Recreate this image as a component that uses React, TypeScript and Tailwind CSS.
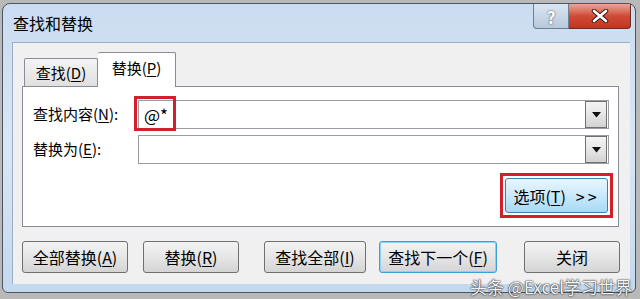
import { ReactNode } from "react";

function Acc({ children }: { children: ReactNode }) {
  return <span className="underline underline-offset-2 decoration-1">{children}</span>;
}

function DropArrow() {
  return (
    <div className="w-[22px] h-[27px] shrink-0 border border-[#707070] bg-gradient-to-b from-[#f4f4f4] via-[#e6e6e6] to-[#d2d2d2] flex items-center justify-center">
      <svg width="9" height="6" viewBox="0 0 9 6">
        <path d="M0 0 H9 L4.5 5.5 Z" fill="#111" />
      </svg>
    </div>
  );
}

function Combo({ children }: { children?: ReactNode }) {
  return (
    <div className="flex-1 h-[29px] border border-[#9a9ca3] bg-white flex items-center pl-[5px] pr-px">
      <div className="flex-1 text-[17px] text-black">{children}</div>
      <DropArrow />
    </div>
  );
}

function Btn({ children, className = "" }: { children: ReactNode; className?: string }) {
  return (
    <div
      className={
        "h-[32px] rounded-[3px] border border-[#707070] bg-gradient-to-b from-[#f3f3f3] via-[#e6e6e6] to-[#d4d4d4] flex items-center justify-center text-[16px] text-black " +
        className
      }
    >
      {children}
    </div>
  );
}

export default function App() {
  return (
    <div className="w-[640px] h-[299px] bg-[#b9b9b9] pt-[3px] pl-[2px] overflow-hidden font-['Noto_Sans_CJK_SC',sans-serif] relative">
      <div className="w-[634px] h-[290px] rounded-t-[8px] rounded-b-[6px] border border-[#4b5563] bg-gradient-to-b from-[#cadcf0] via-[#d9e7f5] to-[#c4d8ee] flex flex-col">
        {/* title bar */}
        <div className="h-[38px] flex items-start shrink-0">
          <div className="pl-[10px] pt-[7px] text-[16px] text-black leading-[24px]">查找和替换</div>
          <div className="ml-auto mr-[4px] flex">
            <div className="w-[36px] h-[25px] rounded-bl-[4px] border border-t-0 border-[#6f7f92] bg-gradient-to-b from-[#dbe6f2] to-[#b8c9dc] flex items-center justify-center text-white text-[17px] font-bold leading-none [text-shadow:0_0_2px_#334]">
              ?
            </div>
            <div className="w-[62px] h-[25px] rounded-br-[4px] border border-t-0 border-l-0 border-[#6b2a22] bg-gradient-to-b from-[#e7a597] via-[#cf4a36] to-[#c2351f] flex items-center justify-center">
              <svg width="18" height="14" viewBox="0 0 18 14">
                <path d="M3 2 L15 12 M15 2 L3 12" stroke="#3a1a14" strokeWidth="4.5" strokeLinecap="round" />
                <path d="M3 2 L15 12 M15 2 L3 12" stroke="#fff" strokeWidth="2.6" strokeLinecap="round" />
              </svg>
            </div>
          </div>
        </div>

        {/* client area */}
        <div className="ml-[9px] w-[618px] h-[242px] border-t border-l border-[#9bb0c8] bg-[#f0f0f0] flex flex-col">
          {/* tabs */}
          <div className="h-[43px] flex items-end pl-[11px] shrink-0">
            <div className="w-[74px] h-[30px] mb-[-2px] border border-b-0 border-[#898c95] rounded-t-[2px] bg-gradient-to-b from-[#f4f4f4] to-[#dedede] flex items-center justify-center text-[15px] text-black">
              查找(<Acc>D</Acc>)
            </div>
            <div className="w-[78px] h-[35px] mb-[-1px] border border-b-0 border-l-0 border-[#898c95] rounded-t-[2px] bg-white flex items-start pt-[4px] justify-center text-[15px] text-black relative z-10">
              替换(<Acc>P</Acc>)
            </div>
          </div>

          {/* panel */}
          <div className="ml-[9px] w-[597px] h-[141px] border border-[#898c95] bg-white relative flex flex-col pt-[13px] pl-[10px] pr-[9px]">
            <div className="flex items-center">
              <div className="w-[105px] text-[15px] text-black">
                查找内容(<Acc>N</Acc>):
              </div>
              <Combo>@*</Combo>
            </div>
            <div className="flex items-center mt-[6px]">
              <div className="w-[105px] text-[15px] text-black">
                替换为(<Acc>E</Acc>):
              </div>
              <Combo />
            </div>
            <div className="flex justify-end mt-[9px] -mr-[4px]">
              <div className="w-[113px] h-[45px] border-[3px] border-[#d21f2b] p-[2px]">
                <div className="h-full rounded-[3px] border border-[#3c7fb1] bg-gradient-to-b from-[#eaf6fd] via-[#c9e9fc] to-[#a7d9f5] flex items-center justify-center text-[16px] text-black gap-[10px]">
                  <span>
                    选项(<Acc>T</Acc>)
                  </span>
                  <span className="tracking-[3px]">&gt;&gt;</span>
                </div>
              </div>
            </div>
            {/* red highlight around find text */}
            <div className="absolute left-[111px] top-[9px] w-[42px] h-[35px] border-[3px] border-[#d21f2b]" />
          </div>

          {/* bottom buttons */}
          <div className="flex pl-[9px] mt-[14px]">
            <Btn className="w-[106px]">
              全部替换(<Acc>A</Acc>)
            </Btn>
            <Btn className="w-[96px] ml-[15px]">
              替换(<Acc>R</Acc>)
            </Btn>
            <Btn className="w-[102px] ml-[25px]">
              查找全部(<Acc>I</Acc>)
            </Btn>
            <Btn className="w-[118px] ml-[13px] !border-[#3c9fd8] shadow-[inset_0_0_0_1px_#8fd0f3]">
              查找下一个(<Acc>F</Acc>)
            </Btn>
            <Btn className="w-[96px] ml-[27px]">关闭</Btn>
          </div>
        </div>
      </div>

      {/* watermark */}
      <div className="absolute right-[8px] bottom-[1px] text-[17px] leading-[22px] text-[#f4f4f4] [text-shadow:0_0_2px_#222,0_0_1px_#222]">
        头条 @Excel学习世界
      </div>
    </div>
  );
}
